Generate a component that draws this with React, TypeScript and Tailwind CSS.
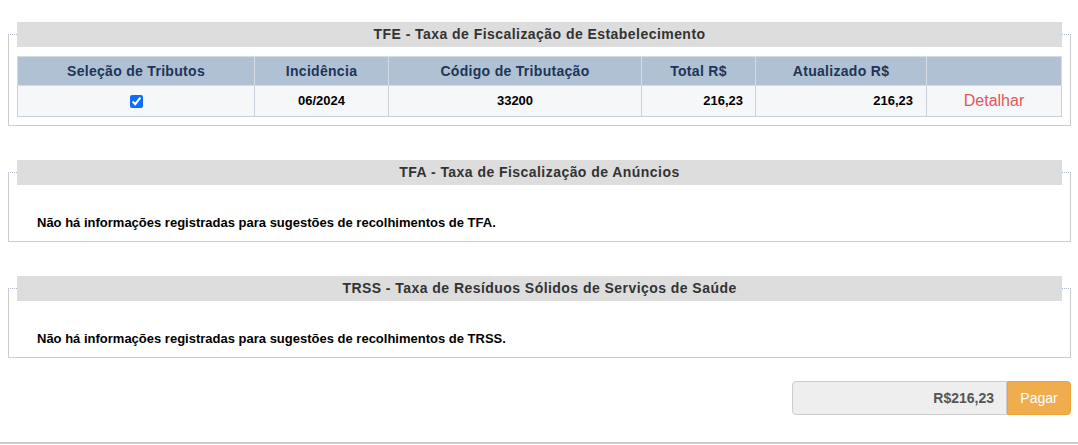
import React from "react";

type Linha = {
  incidencia: string;
  codigo: string;
  total: string;
  atualizado: string;
};

const tfe: Linha[] = [
  { incidencia: "06/2024", codigo: "33200", total: "216,23", atualizado: "216,23" },
];

function Secao({ titulo, children, className = "" }: { titulo: string; children: React.ReactNode; className?: string }) {
  return (
    <fieldset
      className={
        "ml-[8px] mr-[7px] min-w-0 border border-[#cccccc] [border-top-style:dotted] border-t-[#a9b7c7] px-[8px] " +
        className
      }
    >
      <legend className="block w-full h-[25px] bg-[#dddddd] text-center text-[14px] leading-[25px] font-bold tracking-[0.45px] text-[#333333]">
        {titulo}
      </legend>
      {children}
    </fieldset>
  );
}

function Vazio({ texto }: { texto: string }) {
  return <div className="pt-[29px] pb-[9px] pl-[20px] text-[13px] leading-[18px] font-bold text-black">{texto}</div>;
}

export default function App() {
  return (
    <div className="w-[1078px] h-[445px] bg-white font-['Liberation_Sans',Arial,sans-serif] pt-[22px]">
      <Secao titulo="TFE - Taxa de Fiscalização de Estabelecimento" className="pt-[9px] pb-[8px]">
        <table className="w-full table-fixed border-collapse border border-[#c9d1db]">
          <colgroup>
            <col className="w-[237px]" />
            <col className="w-[134px]" />
            <col className="w-[253px]" />
            <col className="w-[114px]" />
            <col className="w-[171px]" />
            <col />
          </colgroup>
          <thead>
            <tr className="h-[29px] bg-[#b0c1d3] text-[14px] font-bold text-[#1c3558] tracking-[0.3px]">
              <th className="border border-[#d3dbe4] font-bold">Seleção de Tributos</th>
              <th className="border border-[#d3dbe4] font-bold">Incidência</th>
              <th className="border border-[#d3dbe4] font-bold">Código de Tributação</th>
              <th className="border border-[#d3dbe4] font-bold">Total R$</th>
              <th className="border border-[#d3dbe4] font-bold">Atualizado R$</th>
              <th className="border border-[#d3dbe4]"></th>
            </tr>
          </thead>
          <tbody>
            {tfe.map((l) => (
              <tr key={l.codigo} className="h-[31px] bg-[#f6f7f9] text-[13px] font-bold text-black">
                <td className="border border-[#c9d1db] text-center">
                  <input type="checkbox" checked readOnly className="w-[13px] h-[13px] align-middle accent-[#0d6efd]" />
                </td>
                <td className="border border-[#c9d1db] text-center">{l.incidencia}</td>
                <td className="border border-[#c9d1db] text-center">{l.codigo}</td>
                <td className="border border-[#c9d1db] text-right pr-[12px]">{l.total}</td>
                <td className="border border-[#c9d1db] text-right pr-[13px]">{l.atualizado}</td>
                <td className="border border-[#c9d1db] text-center">
                  <a className="text-[16px] font-normal text-[#e0575b] cursor-pointer">Detalhar</a>
                </td>
              </tr>
            ))}
          </tbody>
        </table>
      </Secao>

      <Secao titulo="TFA - Taxa de Fiscalização de Anúncios" className="mt-[34px]">
        <Vazio texto="Não há informações registradas para sugestões de recolhimentos de TFA." />
      </Secao>

      <Secao titulo="TRSS - Taxa de Resíduos Sólidos de Serviços de Saúde" className="mt-[34px]">
        <Vazio texto="Não há informações registradas para sugestões de recolhimentos de TRSS." />
      </Secao>

      <div className="flex justify-end mr-[7px] mt-[23px]">
        <input
          type="text"
          readOnly
          value="R$216,23"
          className="w-[215px] h-[34px] rounded-l-[4px] border border-[#cccccc] bg-[#eeeeee] pr-[12px] text-right text-[14px] font-bold text-[#555555] outline-none"
        />
        <button className="w-[64px] h-[34px] rounded-r-[4px] border border-[#eea236] bg-[#f0ad4e] text-[14px] text-white">
          Pagar
        </button>
      </div>

      <div className="mt-[27px] border-t-2 border-[#cccccc]" />
    </div>
  );
}
